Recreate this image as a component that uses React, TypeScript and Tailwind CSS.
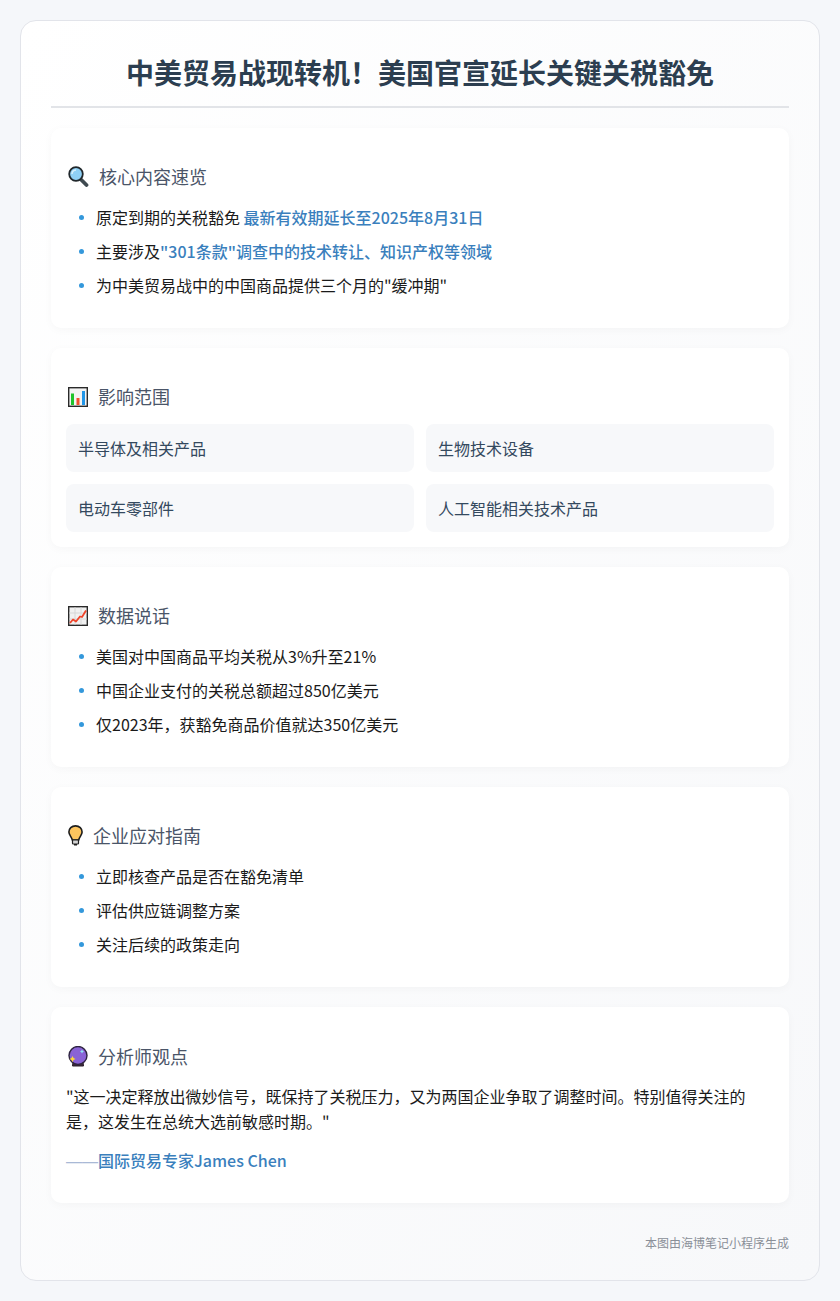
const CJK = "font-['Noto_Sans_CJK_SC','Noto_Sans',sans-serif]";

const Magnifier = () => (
  <svg width="21" height="21" viewBox="0 0 21 21" className="shrink-0">
    <path d="M12.5 13 L18.5 19" stroke="#3f4a50" strokeWidth="3.8" strokeLinecap="round" />
    <circle cx="8" cy="8" r="6.8" fill="#8fd0f5" stroke="#20272b" strokeWidth="1.8" />
    <path d="M4 8 A4.2 4.2 0 0 1 8 3.9" fill="none" stroke="#d8f0fc" strokeWidth="1.5" />
  </svg>
);

const BarChart = () => (
  <svg width="20" height="20" viewBox="0 0 20 20" className="shrink-0">
    <rect x="0.7" y="0.7" width="18.6" height="18.6" fill="#f3f3f3" stroke="#2a2a2a" strokeWidth="1.4" />
    <rect x="3" y="6.5" width="3" height="11.5" fill="#1fc32b" />
    <rect x="8.5" y="11" width="3" height="7" fill="#f2502c" />
    <rect x="14" y="4" width="3" height="14" fill="#2196e8" />
  </svg>
);

const LineChart = () => (
  <svg width="20" height="20" viewBox="0 0 20 20" className="shrink-0">
    <rect x="0.7" y="0.7" width="18.6" height="18.6" fill="#f1f1f1" stroke="#2a2a2a" strokeWidth="1.4" />
    <path d="M7 1V19M13 1V19M1 7H19M1 13H19" stroke="#d2d2d2" strokeWidth="0.8" />
    <path d="M2 17 L5 13.5 L8 15.5 L12 10.5 L14 11 L18 4.5" fill="none" stroke="#f0442a" strokeWidth="1.8" strokeLinejoin="round" />
  </svg>
);

const Bulb = () => (
  <svg width="15" height="21" viewBox="0 0 15 21" className="shrink-0">
    <path
      d="M7.5 0.9 C3.6 0.9 0.9 3.6 0.9 7.1 C0.9 10.1 3.6 11.6 4.3 15 H10.7 C11.4 11.6 14.1 10.1 14.1 7.1 C14.1 3.6 11.4 0.9 7.5 0.9 Z"
      fill="#fdc55e"
      stroke="#1e1e1e"
      strokeWidth="1.6"
    />
    <rect x="4.5" y="15" width="6" height="4" rx="0.8" fill="#d4d4d4" stroke="#1e1e1e" strokeWidth="1.2" />
    <rect x="6" y="19" width="3" height="1.5" fill="#1e1e1e" />
  </svg>
);

const Ball = () => (
  <svg width="20" height="21" viewBox="0 0 20 21" className="shrink-0">
    <path d="M5 16 H15 L15.5 20 H4.5 Z" fill="#3a2a3a" stroke="#2a1e2a" strokeWidth="1" />
    <circle cx="10" cy="9.5" r="9" fill="#8a63d6" stroke="#2e2440" strokeWidth="1.4" />
    <path d="M14 3.5 l0.7 1.3 1.3 0.7 -1.3 0.7 -0.7 1.3 -0.7 -1.3 -1.3 -0.7 1.3 -0.7z" fill="#8ee4f5" />
    <path d="M4.5 10 l1 2 2 1 -2 1 -1 2 -1 -2 -2 -1 2 -1z" fill="#ffd93b" />
  </svg>
);

function Heading({ icon, title, extra = "" }: { icon: React.ReactNode; title: string; extra?: string }) {
  return (
    <h2 className={`flex items-center gap-[10px] h-[27px] mt-5 text-[18px] leading-[27px] font-normal text-[#4a5568] ${extra}`}>
      <span className="ml-[2px] flex items-center">{icon}</span>
      {title}
    </h2>
  );
}

function Bullet({ children }: { children: React.ReactNode }) {
  return (
    <li className="flex items-center h-6 mb-[10px] last:mb-0 text-[16px] leading-6 text-[#1a1a1a]">
      <span className="w-[5px] h-[5px] rounded-full bg-[#3498db] ml-[13px] mr-3 shrink-0" />
      <span>{children}</span>
    </li>
  );
}

function Card({ children }: { children: React.ReactNode }) {
  return (
    <section className="bg-white rounded-[10px] p-[15px] mb-5 shadow-[0_2px_10px_rgba(0,0,0,0.03)]">
      {children}
    </section>
  );
}

const Hi = ({ children }: { children: React.ReactNode }) => (
  <span className="text-[#3a7fbd] font-medium">{children}</span>
);

function List({ items }: { items: React.ReactNode[] }) {
  return (
    <ul className="mt-[15px] mb-[16px]">
      {items.map((t, i) => (
        <Bullet key={i}>{t}</Bullet>
      ))}
    </ul>
  );
}

export default function App() {
  return (
    <div className={`${CJK} bg-[#f5f7fa] p-5 h-[1301px]`}>
      <div className="rounded-2xl border border-[#e2e4ea] bg-gradient-to-br from-white to-[#f7f8fa] pt-[30px] px-[30px] h-[1261px]">
        <h1 className="text-[28px] leading-[42px] font-bold text-center text-[#2c3e50] pb-[13px] border-b-2 border-[#e2e4e8] mb-5">
          中美贸易战现转机！美国官宣延长关键关税豁免
        </h1>

        <Card>
          <Heading icon={<Magnifier />} title="核心内容速览" />
          <List
            items={[
              <>原定到期的关税豁免 <Hi>最新有效期延长至2025年8月31日</Hi></>,
              <>主要涉及<Hi>"301条款"调查中的技术转让、知识产权等领域</Hi></>,
              <>为中美贸易战中的中国商品提供三个月的"缓冲期"</>,
            ]}
          />
        </Card>

        <Card>
          <Heading icon={<BarChart />} title="影响范围" extra="mb-[14px]" />
          <div className="grid grid-cols-2 gap-3">
            {["半导体及相关产品", "生物技术设备", "电动车零部件", "人工智能相关技术产品"].map((t) => (
              <div key={t} className="bg-[#f7f8fa] rounded-lg h-12 flex items-center px-3 text-[16px] text-[#34495e]">
                {t}
              </div>
            ))}
          </div>
        </Card>

        <Card>
          <Heading icon={<LineChart />} title="数据说话" />
          <List
            items={[
              <>美国对中国商品平均关税从3%升至21%</>,
              <>中国企业支付的关税总额超过850亿美元</>,
              <>仅2023年，获豁免商品价值就达350亿美元</>,
            ]}
          />
        </Card>

        <Card>
          <Heading icon={<Bulb />} title="企业应对指南" />
          <List items={["立即核查产品是否在豁免清单", "评估供应链调整方案", "关注后续的政策走向"]} />
        </Card>

        <Card>
          <Heading icon={<Ball />} title="分析师观点" extra="!mt-[21px]" />
          <p className="mt-[14px] pr-[15px] text-[16px] leading-[25px] text-[#1a1a1a]">
            "这一决定释放出微妙信号，既保持了关税压力，又为两国企业争取了调整时间。特别值得关注的是，这发生在总统大选前敏感时期。"
          </p>
          <p className="mt-[14px] mb-[14px] text-[16px] leading-6 text-[#3a7fbd] font-medium">
            <span className="font-['Liberation_Sans',sans-serif] text-[#a9b9d6]">——</span>国际贸易专家James Chen
          </p>
        </Card>

        <p className="text-right text-[12px] leading-[18px] text-[#8a8f98] mt-[31px]">本图由海博笔记小程序生成</p>
      </div>
    </div>
  );
}
